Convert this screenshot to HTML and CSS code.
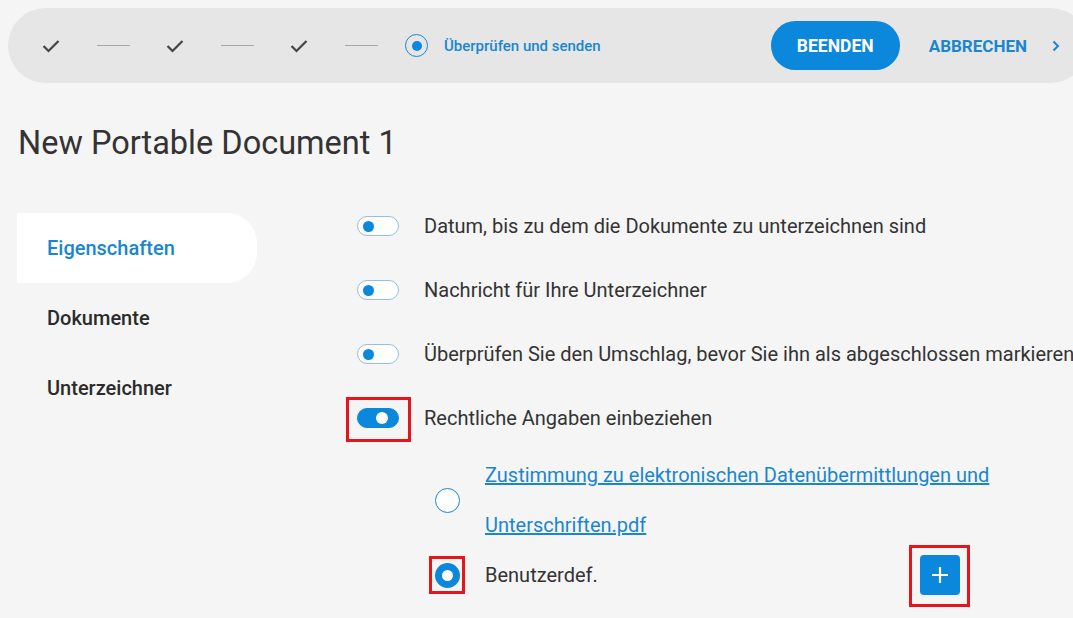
FILE: index.html
```html
<!DOCTYPE html>
<html>
<head>
  <meta charset="UTF-8">
  <title>New Portable Document 1</title>
  <link rel="stylesheet" href="styles.css">
</head>
<body>
  <div class="stepbar">
    <div class="steps">
      <svg class="check" width="18" height="14" viewBox="0 0 18 14"><polyline points="1.5,7 6.5,12 16.5,2" fill="none" stroke="#444" stroke-width="2.2"/></svg>
      <span class="step-line"></span>
      <svg class="check" width="18" height="14" viewBox="0 0 18 14"><polyline points="1.5,7 6.5,12 16.5,2" fill="none" stroke="#444" stroke-width="2.2"/></svg>
      <span class="step-line"></span>
      <svg class="check" width="18" height="14" viewBox="0 0 18 14"><polyline points="1.5,7 6.5,12 16.5,2" fill="none" stroke="#444" stroke-width="2.2"/></svg>
      <span class="step-line"></span>
      <span class="step-current"><span class="step-dot"></span></span>
      <span class="step-label">Überprüfen und senden</span>
    </div>
    <div class="actions">
      <button class="btn-finish">BEENDEN</button>
      <button class="btn-cancel">ABBRECHEN</button>
      <svg class="chevron" width="8" height="12" viewBox="0 0 8 12"><polyline points="1.5,1.5 6,6 1.5,10.5" fill="none" stroke="#1a86d0" stroke-width="2"/></svg>
    </div>
  </div>

  <h1 class="doc-title">New Portable Document 1</h1>

  <div class="main">
    <div class="sidebar">
      <div class="nav-item active">Eigenschaften</div>
      <div class="nav-item">Dokumente</div>
      <div class="nav-item">Unterzeichner</div>
    </div>

    <div class="content">
      <div class="option-row">
        <span class="toggle"><span class="knob"></span></span>
        <span class="option-text">Datum, bis zu dem die Dokumente zu unterzeichnen sind</span>
      </div>
      <div class="option-row">
        <span class="toggle"><span class="knob"></span></span>
        <span class="option-text">Nachricht für Ihre Unterzeichner</span>
      </div>
      <div class="option-row">
        <span class="toggle"><span class="knob"></span></span>
        <span class="option-text">Überprüfen Sie den Umschlag, bevor Sie ihn als abgeschlossen markieren</span>
      </div>
      <div class="option-row">
        <span class="toggle on marked"><span class="knob"></span></span>
        <span class="option-text">Rechtliche Angaben einbeziehen</span>
      </div>

      <div class="legal-options">
        <div class="radio-row">
          <span class="radio"></span>
          <a class="legal-link" href="#">Zustimmung zu elektronischen Datenübermittlungen und<br>Unterschriften.pdf</a>
        </div>
        <div class="radio-row">
          <span class="radio checked marked-radio"></span>
          <span class="radio-label">Benutzerdef.</span>
          <button class="btn-add marked-add">
            <svg width="20" height="20" viewBox="0 0 20 20"><path d="M10 2v16M2 10h16" stroke="#fff" stroke-width="2.2"/></svg>
          </button>
        </div>
      </div>
    </div>
  </div>
</body>
</html>
```

FILE: styles.css
```css
body {
  margin: 0;
  font-family: Roboto, "Liberation Sans", sans-serif;
  background-color: #f5f5f5;
  color: #333;
  width: 1073px;
  height: 618px;
  overflow: hidden;
}

.stepbar {
  display: flex;
  align-items: center;
  justify-content: space-between;
  margin: 8px 0 0 8px;
  width: 1080px;
  height: 75px;
  background: #e6e6e6;
  border-radius: 38px;
  padding-left: 34px;
  box-sizing: border-box;
}

.steps {
  display: flex;
  align-items: center;
}

.check {
  display: block;
}

.step-line {
  width: 33px;
  height: 1px;
  background: #a8a8a8;
  margin: 0 36px 0 37px;
}

.step-current {
  width: 21px;
  height: 21px;
  border: 1.5px solid #1a86d0;
  border-radius: 50%;
  display: flex;
  align-items: center;
  justify-content: center;
  margin-left: -9px;
}

.step-dot {
  width: 10px;
  height: 10px;
  border-radius: 50%;
  background: #0b87dc;
}

.step-label {
  margin-left: 16px;
  font-size: 15px;
  font-weight: 500;
  color: #1a86d0;
}

.actions {
  display: flex;
  align-items: center;
  padding-right: 28px;
}

.btn-finish {
  width: 129px;
  height: 49px;
  border: none;
  border-radius: 25px;
  background: #0b87dc;
  color: #fff;
  font-family: inherit;
  font-size: 17.5px;
  font-weight: 700;
}

.btn-cancel {
  border: none;
  background: none;
  padding: 0;
  margin-left: 29px;
  color: #1a86d0;
  font-family: inherit;
  font-size: 17px;
  font-weight: 700;
}

.chevron {
  margin-left: 25px;
}

.doc-title {
  margin: 41px 0 0 18px;
  font-size: 32.5px;
  font-weight: 400;
  line-height: 38px;
  color: #333;
}

.main {
  display: flex;
  margin-top: 32px;
}

.sidebar {
  flex-shrink: 0;
  width: 240px;
  margin-left: 17px;
  padding-top: 19px;
}

.nav-item {
  height: 70px;
  line-height: 70px;
  padding-left: 30px;
  font-size: 20px;
  font-weight: 500;
  color: #2b2b2b;
}

.nav-item.active {
  background: #fff;
  border-radius: 0 30px 30px 0;
  color: #1a86d0;
}

.content {
  margin-left: 100px;
}

.option-row {
  display: flex;
  align-items: center;
  height: 64px;
}

.toggle {
  position: relative;
  width: 42px;
  height: 20px;
  box-sizing: border-box;
  border: 1px solid #8ec0e8;
  border-radius: 10px;
  background: #fff;
  display: flex;
  align-items: center;
  padding-left: 5px;
  flex-shrink: 0;
}

.knob {
  width: 11px;
  height: 11px;
  border-radius: 50%;
  background: #0b87dc;
}

.toggle.on {
  background: #0b87dc;
  border-color: #0b87dc;
  justify-content: flex-end;
  padding: 0 10px 0 0;
}

.toggle.on .knob {
  background: #fff;
  width: 12px;
  height: 12px;
}

.option-text {
  margin-left: 25px;
  font-size: 20px;
  white-space: nowrap;
}

.legal-options {
  margin-left: 78px;
}

.radio-row {
  display: flex;
  align-items: center;
}

.radio {
  position: relative;
  width: 25px;
  height: 25px;
  box-sizing: border-box;
  border: 1px solid #1a86d0;
  border-radius: 50%;
  background: #fff;
  flex-shrink: 0;
}

.radio.checked {
  border: 7px solid #0b87dc;
}

.legal-link {
  margin-left: 25px;
  font-size: 20px;
  line-height: 50px;
  color: #1a86d0;
  white-space: nowrap;
}

.radio-label {
  margin-left: 25px;
  width: 435px;
  line-height: 50px;
  font-size: 20px;
}

.btn-add {
  position: relative;
  flex-shrink: 0;
  width: 40px;
  height: 40px;
  border: none;
  border-radius: 4px;
  background: #0b87dc;
  display: flex;
  align-items: center;
  justify-content: center;
  padding: 0;
}

.marked::after,
.marked-radio::after,
.marked-add::after {
  content: "";
  position: absolute;
  border: 3px solid #e8141b;
}

.marked::after {
  left: -12px;
  right: -13px;
  top: -12px;
  bottom: -15px;
}

.marked-radio::after {
  left: -13px;
  right: -12px;
  top: -14px;
  bottom: -13px;
}

.marked-add::after {
  left: -11px;
  right: -10px;
  top: -10px;
  bottom: -12px;
}
```
